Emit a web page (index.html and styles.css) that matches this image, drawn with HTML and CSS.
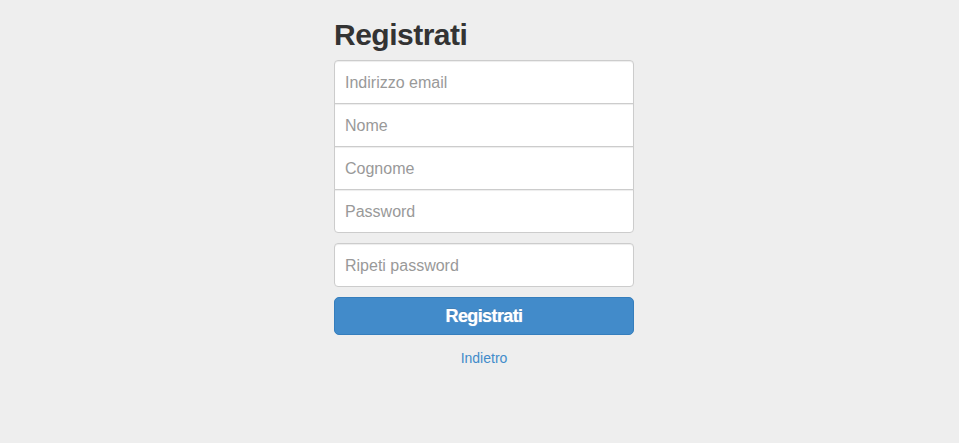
FILE: index.html
```html
<!DOCTYPE html>
<html lang="it">
<head>
<meta charset="utf-8">
<title>Registrati</title>
<link rel="stylesheet" href="styles.css">
</head>
<body>
<div class="page">
  <form class="form-signup">
    <h2 class="title">Registrati</h2>
    <div class="group">
      <input class="field field-first" type="email" placeholder="Indirizzo email">
      <input class="field field-mid" type="text" placeholder="Nome">
      <input class="field field-mid" type="text" placeholder="Cognome">
      <input class="field field-last" type="password" placeholder="Password">
    </div>
    <input class="field field-single" type="password" placeholder="Ripeti password">
    <button class="btn" type="button">Registrati</button>
    <a class="back" href="#">Indietro</a>
  </form>
</div>
</body>
</html>
```
FILE: styles.css
```css
html, body {
  margin: 0;
  padding: 0;
  background: #eeeeee;
  height: 100%;
}
body {
  font-family: "Liberation Sans", Arial, Helvetica, sans-serif;
  color: #333;
}
.page {
  display: flex;
  justify-content: center;
  padding-left: 9px;
  padding-top: 18px;
}
.form-signup {
  width: 300px;
  display: flex;
  flex-direction: column;
}
.title {
  margin: 0 0 9px 0;
  font-size: 30px;
  line-height: 33px;
  font-weight: bold;
  letter-spacing: -0.5px;
  color: #333;
}
.group {
  display: flex;
  flex-direction: column;
}
.field {
  box-sizing: border-box;
  width: 300px;
  height: 44px;
  padding: 11px 10px 9px;
  border: 1px solid #cccccc;
  background: #fff;
  font-family: "Liberation Sans", Arial, Helvetica, sans-serif;
  font-size: 16px;
  color: #555;
  outline: none;
  margin: 0;
  box-shadow: inset 0 1px 1px rgba(0,0,0,0.075);
}
.field::placeholder {
  color: #999999;
}
.field-first {
  border-radius: 4px 4px 0 0;
  margin-bottom: -1px;
}
.field-mid {
  border-radius: 0;
  margin-bottom: -1px;
}
.field-last {
  border-radius: 0 0 4px 4px;
}
.field-single {
  border-radius: 4px;
  margin-top: 10px;
}
.btn {
  margin-top: 10px;
  box-sizing: border-box;
  width: 300px;
  height: 38px;
  padding: 6px 12px;
  border: 1px solid #357ebd;
  border-radius: 5px;
  background: #428bca;
  color: #fff;
  font-family: "Liberation Sans", Arial, Helvetica, sans-serif;
  font-size: 18px;
  font-weight: bold;
  letter-spacing: -0.6px;
  line-height: 24px;
  text-shadow: 0 0 1px rgba(255,255,255,0.6), 0 -1px 0 rgba(0,0,0,0.15);
  cursor: pointer;
}
.back {
  margin-top: 13px;
  align-self: center;
  font-size: 14px;
  line-height: 20px;
  color: #428bca;
  text-decoration: none;
}
```
